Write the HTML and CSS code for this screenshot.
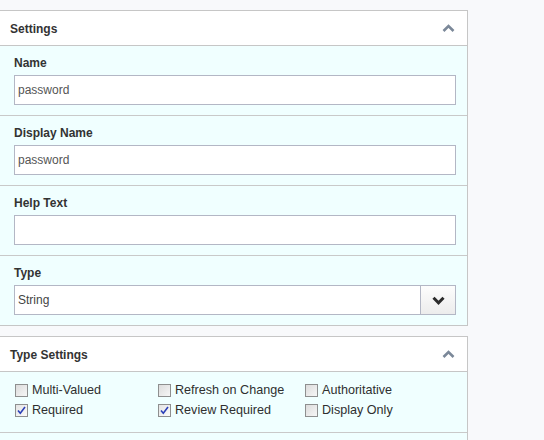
FILE: index.html
```html
<!DOCTYPE html>
<html>
<head>
<meta charset="utf-8">
<link rel="stylesheet" href="styles.css">
</head>
<body>
<div class="panel">
  <div class="panel-head">
    <span class="title">Settings</span>
    <svg class="chev-up" width="13" height="8" viewBox="0 0 13 8"><polyline points="1.5,7 6.5,2 11.5,7" fill="none" stroke="#7b8899" stroke-width="2.6"/></svg>
  </div>
  <div class="panel-body">
    <div class="field">
      <div class="label">Name</div>
      <div class="input">password</div>
    </div>
    <div class="field">
      <div class="label">Display Name</div>
      <div class="input">password</div>
    </div>
    <div class="field">
      <div class="label">Help Text</div>
      <div class="input"></div>
    </div>
    <div class="field">
      <div class="label">Type</div>
      <div class="select">
        <div class="select-value">String</div>
        <div class="select-btn">
          <svg width="13" height="9" viewBox="0 0 13 9"><polyline points="1.5,1.8 6.5,6.8 11.5,1.8" fill="none" stroke="#2b2b2b" stroke-width="3"/></svg>
        </div>
      </div>
    </div>
  </div>
</div>

<div class="panel">
  <div class="panel-head">
    <span class="title">Type Settings</span>
    <svg class="chev-up" width="13" height="8" viewBox="0 0 13 8"><polyline points="1.5,7 6.5,2 11.5,7" fill="none" stroke="#7b8899" stroke-width="2.6"/></svg>
  </div>
  <div class="panel-body">
    <div class="checks">
      <div class="check"><span class="box"></span>Multi-Valued</div>
      <div class="check"><span class="box"></span>Refresh on Change</div>
      <div class="check"><span class="box"></span>Authoritative</div>
      <div class="check"><span class="box checked"><svg width="9" height="9" viewBox="0 0 9 9"><polyline points="1,4.5 3.3,7.2 8,1" fill="none" stroke="#2a3fb8" stroke-width="1.6"/></svg></span>Required</div>
      <div class="check"><span class="box checked"><svg width="9" height="9" viewBox="0 0 9 9"><polyline points="1,4.5 3.3,7.2 8,1" fill="none" stroke="#2a3fb8" stroke-width="1.6"/></svg></span>Review Required</div>
      <div class="check"><span class="box"></span>Display Only</div>
    </div>
    <div class="rest"></div>
  </div>
</div>
</body>
</html>
```
FILE: styles.css
```css
html, body {
  margin: 0;
  padding: 0;
}
body {
  background: #f8f9fb;
  padding-top: 10px;
  font-family: Arial, "Liberation Sans", sans-serif;
  font-size: 12px;
  color: #333;
}
.panel {
  width: 467px;
  border: 1px solid #c6c6c6;
  border-left: none;
  background: #f0ffff;
  margin-bottom: 10px;
}
.panel-head {
  height: 34px;
  background: #fff;
  border-bottom: 1px solid #c6c6c6;
  display: flex;
  align-items: center;
  justify-content: space-between;
  padding: 0 12px 0 10px;
}
.title {
  font-weight: bold;
  font-size: 12px;
  color: #333;
  padding-top: 1px;
}
.chev-up {
  display: block;
  margin-top: -1px;
}
.field {
  padding: 9px 11px 10px 14px;
  border-bottom: 1px solid #c9c9c9;
}
.field:last-child {
  border-bottom: none;
}
.label {
  font-weight: bold;
  height: 16px;
  line-height: 16px;
  margin-bottom: 4px;
  color: #333;
}
.input {
  height: 28px;
  line-height: 28px;
  border: 1px solid #b3b7c5;
  background: #fff;
  padding: 0 3px;
  color: #555;
}
.select {
  display: flex;
  height: 30px;
}
.select-value {
  flex: 1;
  height: 28px;
  line-height: 28px;
  border: 1px solid #b3b7c5;
  border-right: none;
  background: #fff;
  padding: 0 3px;
  color: #444;
}
.select-btn {
  width: 34px;
  height: 28px;
  border: 1px solid #b3b7c5;
  background: linear-gradient(#fdfdfd, #ececec);
  display: flex;
  align-items: center;
  justify-content: center;
}
.select-btn svg {
  display: block;
}
.checks {
  display: grid;
  grid-template-columns: 143px 147px auto;
  padding: 8px 0 12px 15px;
  border-bottom: 1px solid #c9c9c9;
}
.check {
  display: flex;
  align-items: center;
  height: 20px;
  font-size: 12.6px;
  color: #2f2f2f;
}
.box {
  width: 11px;
  height: 11px;
  border: 1px solid #8e8f8f;
  background: linear-gradient(135deg, #dcdcdc, #f6f6f6);
  margin-right: 4px;
  display: flex;
  align-items: center;
  justify-content: center;
  flex: none;
}
.box.checked {
  background: linear-gradient(135deg, #e4e4e4, #fafafa);
}
.box svg {
  display: block;
}
.rest {
  height: 30px;
}
```
